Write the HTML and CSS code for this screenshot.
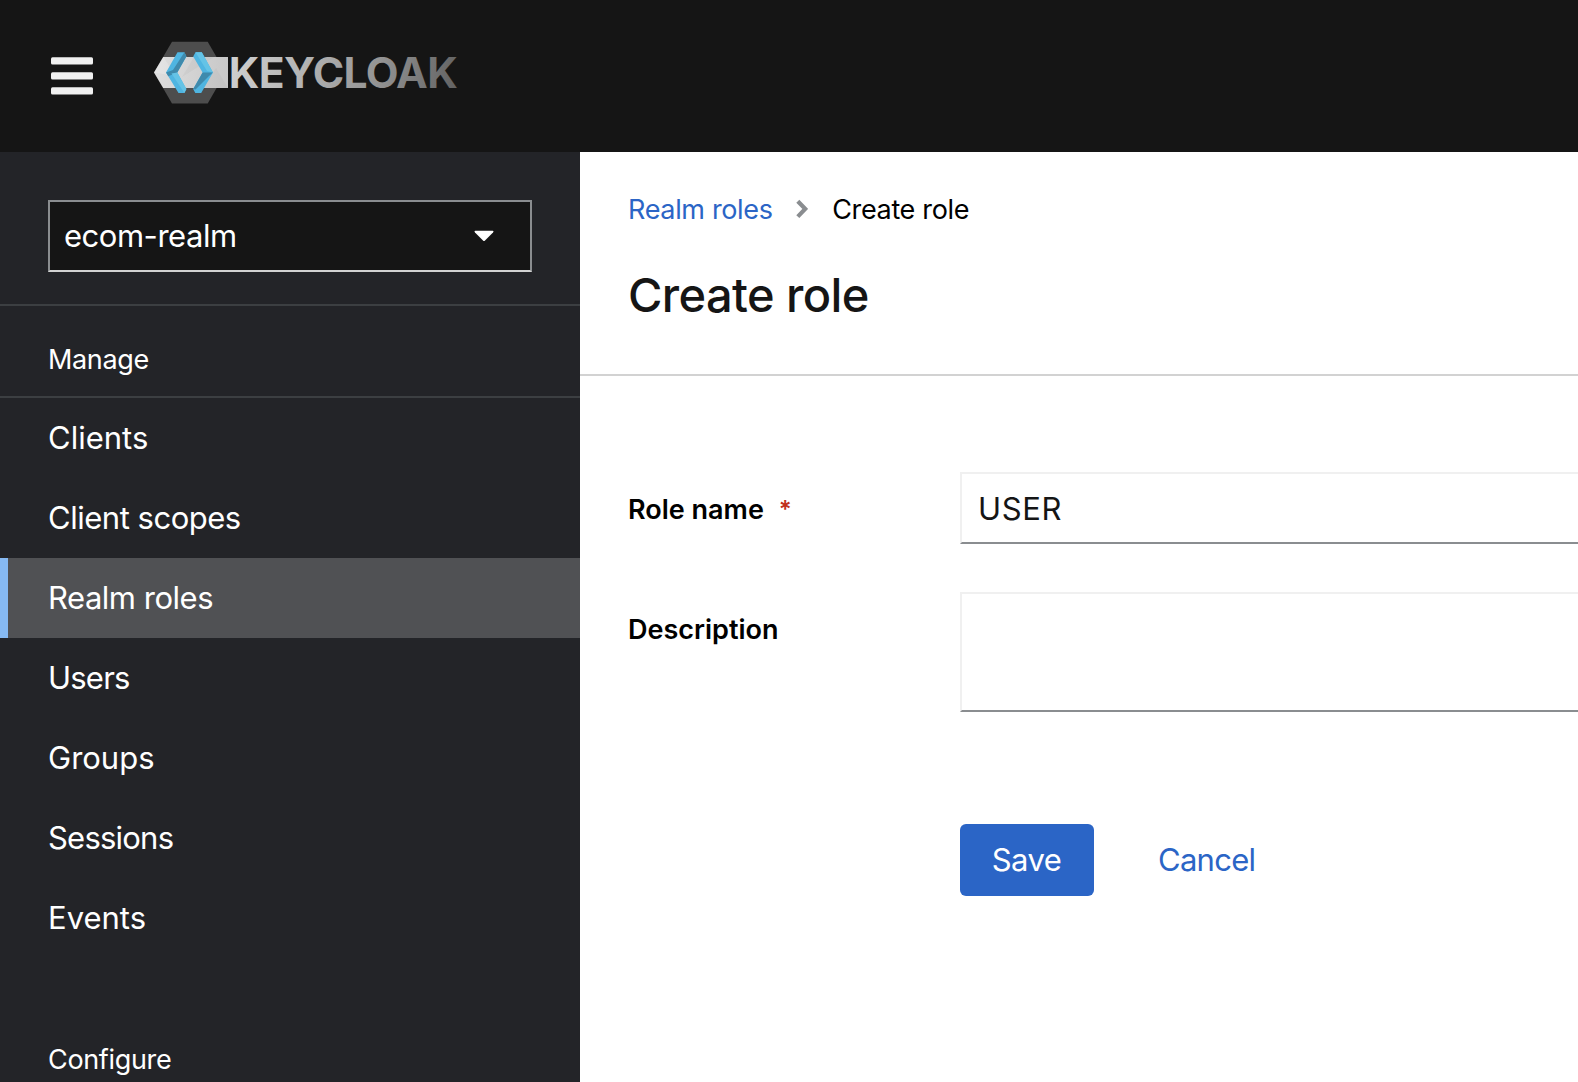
FILE: index.html
```
<!DOCTYPE html>
<html lang="en">
<head>
<meta charset="utf-8">
<title>Create role - Keycloak</title>
<link rel="stylesheet" href="styles.css">
</head>
<body>
<header class="masthead">
  <button class="menu-toggle" aria-label="Toggle navigation">
    <svg width="42" height="38" viewBox="0 0 42 38" fill="#f0f0f0"><rect y="0.3" width="42" height="7.3" rx="1.5"/><rect y="15.3" width="42" height="7.3" rx="1.5"/><rect y="30.3" width="42" height="7.3" rx="1.5"/></svg>
  </button>
  <svg class="brand" width="306" height="64" viewBox="0 0 306 64" role="img" aria-label="Keycloak">
    <defs>
      <linearGradient id="band" x1="0" x2="1"><stop offset="0" stop-color="#dedede"/><stop offset="1" stop-color="#c8c8c8"/></linearGradient>
      <linearGradient id="word" gradientUnits="userSpaceOnUse" x1="77" y1="10" x2="303" y2="48"><stop offset="0" stop-color="#d0d0d0"/><stop offset=".3" stop-color="#b6b6b6"/><stop offset=".65" stop-color="#949494"/><stop offset="1" stop-color="#626262"/></linearGradient>
    </defs>
    <path d="M18 1.7H53.7L71.5 32.5 53.7 63.5H18L0 32.5Z" fill="#4d4d4d"/>
    <path d="M9.2 17H74V48H9.2L0 32.5Z" fill="url(#band)"/>
    <path d="M9.2 17 22 36 0 32.5Z" fill="#fff" opacity=".2"/>
    <path d="M40 17 60 17 28 37ZM62 28 74 48H48Z" fill="#999" opacity=".12"/>
    <path d="M23.5 12.3H30.4L32.4 16.5 23.3 32.5 32.4 49 30.4 53H24.5L12 32.5Z" fill="#4fb5e1"/>
    <path d="M30.4 12.3 32.4 16.5 23.3 32.5 14.3 36.3 12 32.5 19 30Z" fill="#3f8aac"/>
    <path d="M23.3 32.5 32.4 49 30.4 53 17.5 33.5Z" fill="#64c3e6"/>
    <path d="M41.5 12.3H47.8L59 32.5 47.2 53H41.3L39.2 49 48.6 32.5 39.2 16.5Z" fill="#4fb5e1"/>
    <path d="M41.5 12.3H47.8L59 32.5 53 31Z" fill="#64c3e6"/>
    <path d="M39.2 49 48.6 32.5 59 32.5 55 36 41.5 49.5Z" fill="#3f8aac"/>
    <text class="brand-name" x="74.8" y="47.8" fill="url(#word)">KEYCLOAK</text>
  </svg>
</header>
<div class="shell">
  <nav class="sidebar">
    <div class="realm-box">
      <button class="realm-select"><span class="realm-name snug">ecom-realm</span>
        <svg width="20" height="12" viewBox="0 0 20 12" fill="#fff"><path d="M1.4 .7H18.6Q20.2 .9 19 2.4L11 10.6Q10 11.6 9 10.6L1 2.4Q-.2 .9 1.4 .7Z"/></svg>
      </button>
    </div>
    <section class="nav-group">
      <h2 class="group-title">Manage</h2>
      <ul class="nav-list">
        <li class="nav-item">Clients</li>
        <li class="nav-item snug">Client scopes</li>
        <li class="nav-item snug current">Realm roles</li>
        <li class="nav-item tight">Users</li>
        <li class="nav-item">Groups</li>
        <li class="nav-item tight">Sessions</li>
        <li class="nav-item">Events</li>
      </ul>
    </section>
    <section class="nav-group">
      <h2 class="group-title">Configure</h2>
    </section>
  </nav>
  <main class="content">
    <div class="page-head">
      <div class="breadcrumb">
        <a class="link">Realm roles</a>
        <svg width="12" height="20" viewBox="0 0 12 20" fill="none" stroke="#8a8d90" stroke-width="4.2"><path d="M1.8 2.2 9.2 9.9 1.8 17.6"/></svg>
        <span>Create role</span>
      </div>
      <h1 class="title">Create role</h1>
    </div>
    <form class="role-form">
      <label class="label" for="name">Role name<span class="required">*</span></label>
      <input class="field" id="name" value="USER">
      <label class="label" for="desc">Description</label>
      <textarea class="field area" id="desc"></textarea>
      <div class="actions">
        <button type="button" class="button primary">Save</button>
        <button type="button" class="button plain">Cancel</button>
      </div>
    </form>
  </main>
</div>
</body>
</html>
```
FILE: styles.css
```
* { box-sizing: border-box; margin: 0; padding: 0; }
body {
  height: 1082px;
  overflow: hidden;
  font-family: Inter, "Open Sans", sans-serif;
  font-size: 31px;
  color: #151515;
  background: #fff;
}
button, input, textarea { font: inherit; border: 0; background: none; }
svg { display: block; flex: none; }

.masthead {
  display: flex;
  height: 152px;
  padding: 40px 0 0 51px;
  background: #151515;
}
.menu-toggle { align-self: flex-start; margin: 17px 61px 0 0; }
.brand-name { font-size: 42.6px; font-weight: 700; letter-spacing: -.66px; }

.shell { display: flex; height: 930px; }
.sidebar { width: 580px; flex: none; overflow: hidden; background: #232428; color: #fff; }
.realm-box { height: 154px; padding: 48px 48px 0; border-bottom: 2px solid #3c3f42; }
.realm-select {
  display: flex;
  align-items: center;
  justify-content: space-between;
  width: 484px;
  height: 72px;
  padding: 0 36px 0 14px;
  color: #fff;
  background: #151515;
  border: 2px solid #8a8d90;
  border-bottom-color: #d2d2d2;
}
.realm-name { padding-bottom: 2px; }
.snug { letter-spacing: -.48px; }
.tight { letter-spacing: -.78px; }

.nav-group { margin-bottom: 48px; }
.group-title {
  height: 92px;
  padding: 16px 0 0 48px;
  font-size: 27px;
  font-weight: 400;
  line-height: 76px;
  letter-spacing: -.34px;
  border-bottom: 2px solid #3c3f42;
}
.nav-list { list-style: none; }
.nav-item { height: 80px; padding-left: 48px; line-height: 80px; }
.current { padding-left: 40px; background: #505154; border-left: 8px solid #86b9f2; }

.content { flex: 1; min-width: 0; overflow: hidden; }
.page-head { height: 224px; padding: 36px 0 0 48px; border-bottom: 2px solid #d2d2d2; }
.breadcrumb {
  display: flex;
  align-items: center;
  height: 42px;
  font-size: 27px;
  letter-spacing: -.34px;
  color: #000;
}
.breadcrumb svg { margin: 0 24px 0 23.5px; }
.link { color: #2b65c6; }
.title {
  margin-top: 29px;
  font-size: 47px;
  font-weight: 500;
  line-height: 72px;
  letter-spacing: -.6px;
}
.role-form {
  display: grid;
  grid-template-columns: 332px 650px;
  row-gap: 48px;
  padding: 96px 0 0 48px;
}
.label { height: 72px; padding-top: 1px; font-size: 27px; font-weight: 600; line-height: 74px; color: #000; }
.required { margin-left: 15px; font-size: 24px; vertical-align: 1px; line-height: 1; color: #c0301c; }
.field {
  width: 650px;
  height: 72px;
  padding: 0 16px;
  color: #151515;
  letter-spacing: .64px;
  border: 2px solid #f0f0f0;
  border-bottom-color: #8a8d90;
}
.area { display: block; height: 120px; resize: none; }
.actions { grid-column: 2; display: flex; gap: 32px; padding-top: 64px; }
.button { height: 72px; line-height: 72px; letter-spacing: -.55px; }
.primary { width: 134px; padding-right: 1px; color: #fff; background: #2b65c6; border-radius: 6px; }
.plain { padding: 0 32px; color: #2b65c6; letter-spacing: -.73px; }
```
